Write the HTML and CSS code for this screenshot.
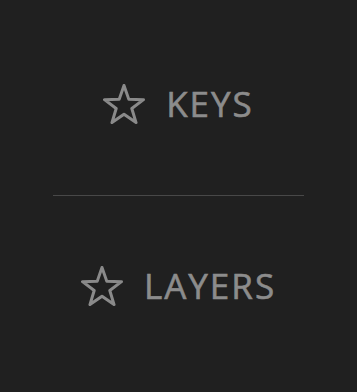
FILE: index.html
```html
<!DOCTYPE html>
<html>
<head>
<meta charset="utf-8">
<link rel="stylesheet" href="styles.css">
</head>
<body>
<div class="menu">
  <div class="item item-keys">
    <svg class="star" width="42" height="40" viewBox="0 0 42 40">
      <polygon points="21,1.5 25.82,15.37 40.5,15.67 28.8,24.53 33.05,38.58 21,30.2 8.95,38.58 13.2,24.53 1.5,15.67 16.18,15.37" fill="none" stroke="#8a8a8a" stroke-width="3" stroke-linejoin="round"/>
    </svg>
    <span class="label">KEYS</span>
  </div>
  <div class="divider"></div>
  <div class="item item-layers">
    <svg class="star" width="42" height="40" viewBox="0 0 42 40">
      <polygon points="21,1.5 25.82,15.37 40.5,15.67 28.8,24.53 33.05,38.58 21,30.2 8.95,38.58 13.2,24.53 1.5,15.67 16.18,15.37" fill="none" stroke="#8a8a8a" stroke-width="3" stroke-linejoin="round"/>
    </svg>
    <span class="label">LAYERS</span>
  </div>
</div>
</body>
</html>
```
FILE: styles.css
```css
html, body {
  margin: 0;
  padding: 0;
  height: 100%;
}
body {
  background: #202020;
  font-family: "Open Sans", "Noto Sans", sans-serif;
}
.menu {
  display: flex;
  flex-direction: column;
  align-items: center;
}
.item {
  display: flex;
  align-items: center;
  gap: 21px;
  height: 48px;
}
.item-keys {
  margin-top: 80px;
}
.item-layers {
  margin-top: 66px;
}
.star {
  display: block;
}
.label {
  font-size: 35px;
  font-weight: 400;
  color: #8c8c8c;
  -webkit-text-stroke: 0.6px #8c8c8c;
  letter-spacing: 2px;
  line-height: 48px;
}
.divider {
  width: 251px;
  height: 1px;
  background: #484848;
  margin-top: 67px;
}
```
